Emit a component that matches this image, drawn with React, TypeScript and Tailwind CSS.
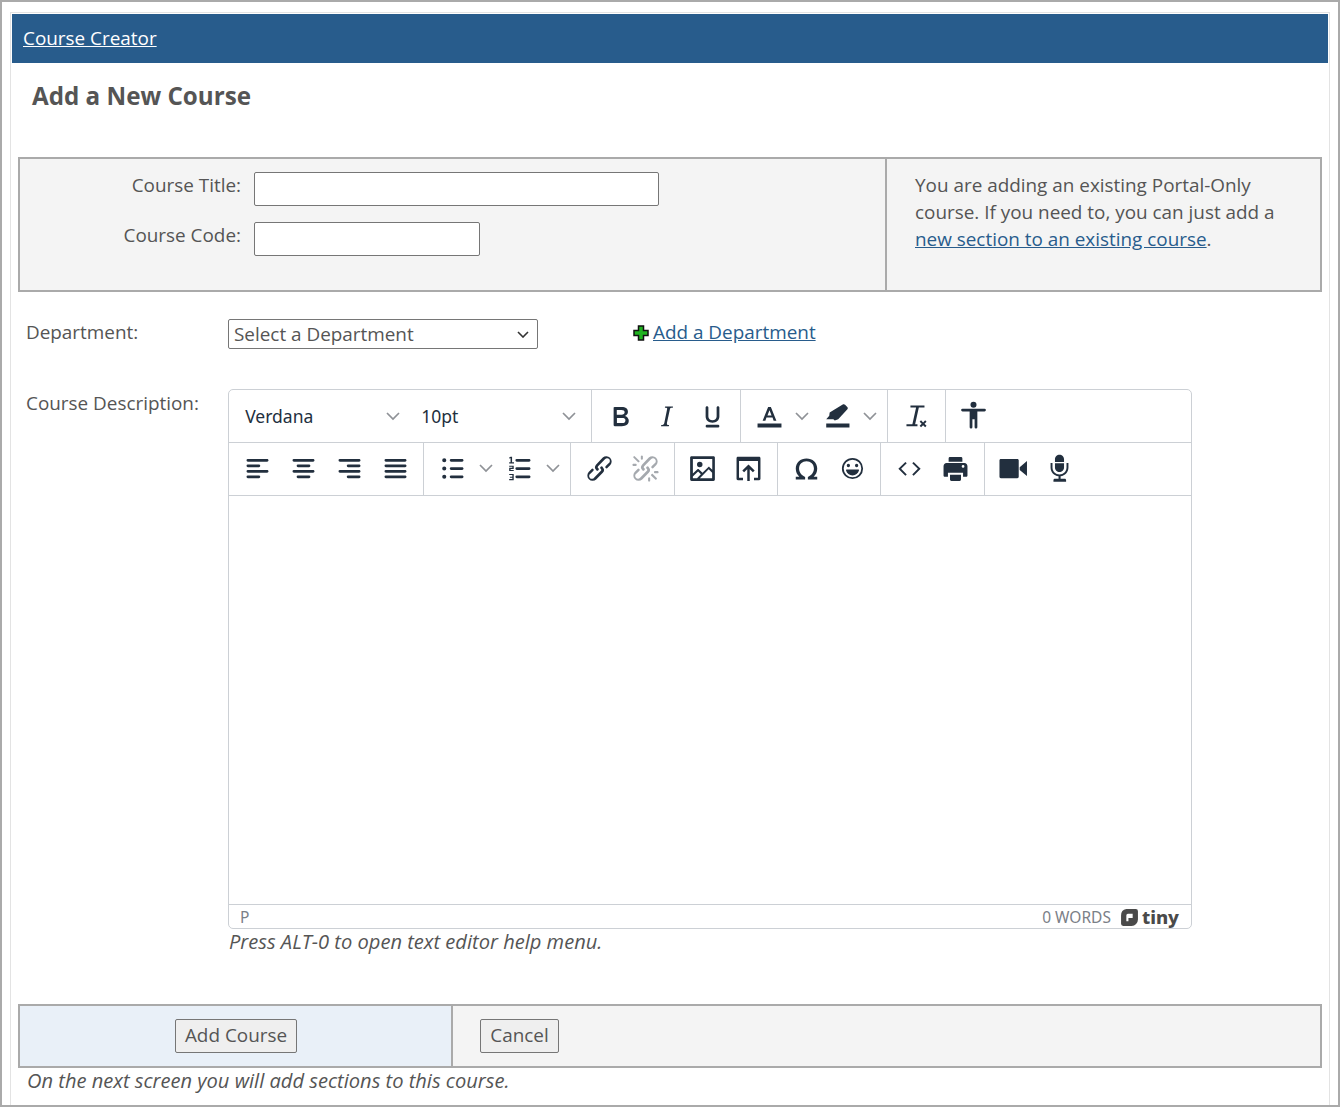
const FONT = "font-['Open_Sans',sans-serif]";
const UI_FONT = "font-['Noto_Sans','Open_Sans',sans-serif]";

function Icon({ d, color = "#222f3e" }: { d: string; color?: string }) {
  return (
    <svg viewBox="0 0 24 24" className="w-[33px] h-[33px]">
      <path d={d} fill={color} />
    </svg>
  );
}

const ICONS = {
  bold: "M7.8 19c-.3 0-.5 0-.6-.2l-.2-.5V5.7c0-.2 0-.4.2-.5l.6-.2h5c1.5 0 2.7.3 3.5 1 .7.6 1.1 1.4 1.1 2.5a3 3 0 0 1-.6 1.9c-.4.6-1 1-1.6 1.2.4.1.9.3 1.3.6s.8.7 1 1.2c.4.4.5 1 .5 1.6 0 1.3-.4 2.3-1.3 3-.8.7-2.1 1-3.8 1H7.8zm5-8.3c.6 0 1.2-.1 1.6-.5.4-.3.6-.7.6-1.3 0-1.1-.8-1.7-2.4-1.7H9.3v3.5h3.4zm.5 6c.7 0 1.3-.1 1.7-.4.4-.4.6-.9.6-1.5s-.2-1-.7-1.4c-.4-.3-1-.4-2-.4H9.4v3.8h4z",
  italic: "M16.7 4.7l-.1.9h-.3c-.6 0-1 0-1.4.3-.3.3-.4.6-.5 1.1l-2.1 9.8v.6c0 .5.4.8 1.4.8h.2l-.2.8H8l.2-.8h.2c1.1 0 1.8-.5 2-1.5l2-9.8.1-.5c0-.6-.4-.8-1.4-.8h-.3l.2-.9h5.8z",
  underline: "M16 4.500c.6 0 1 .4 1 1v6.500c0 2.800-2.200 4.500-5 4.500s-5-1.700-5-4.500V5.500c0-.6.4-1 1-1s1 .4 1 1v6.500c0 1.600 1.300 2.700 3 2.700s3-1.100 3-2.700V5.500c0-.6.4-1 1-1zM8 18h8a1 1 0 0 1 0 2H8a1 1 0 0 1 0-2z",
  forecolor: "M3.300 17h17.400v3H3.300zM11 5h2l4 10h-2l-.8-2.200H9.800L9 15H7l4-10zm1 2.500l-1.500 3.700h3L12 7.500z",
  highlight: "M3.800 17h16.900v3H3.800zM15.800 3.300c.5-.4 1.200-.4 1.700.1l1.600 1.700c.5.5.5 1.200.1 1.700L12.500 14l-2.500.9-1-.9H3.800L6 11.400l.3-2.400z",
  removeformat: "M7.600 4h10.200v1.500h-4.100L11 17.600h1.700V19h-8v-1.400h4.300l2.700-12.100H7.600zM15.300 14.800l1.500 1.500 1.500-1.500 1 1-1.500 1.500 1.500 1.500-1 1-1.500-1.500-1.500 1.500-1-1 1.500-1.500-1.500-1.500z",
  accessibility: "M12 1.200a2.200 2.200 0 1 1 0 4.400 2.200 2.200 0 0 1 0-4.400zM4 6.300h16a1 1 0 0 1 0 2h-5.200v11.500a1 1 0 0 1-2 0V14h-1.600v5.800a1 1 0 0 1-2 0V8.300H4a1 1 0 0 1 0-2z",
  alignLeft: "M5 5h14c.6 0 1 .4 1 1s-.4 1-1 1H5a1 1 0 1 1 0-2zm0 4h8c.6 0 1 .4 1 1s-.4 1-1 1H5a1 1 0 1 1 0-2zm0 8h8c.6 0 1 .4 1 1s-.4 1-1 1H5a1 1 0 0 1 0-2zm0-4h14c.6 0 1 .4 1 1s-.4 1-1 1H5a1 1 0 0 1 0-2z",
  alignCenter: "M5 5h14c.6 0 1 .4 1 1s-.4 1-1 1H5a1 1 0 1 1 0-2zm3 4h8c.6 0 1 .4 1 1s-.4 1-1 1H8a1 1 0 1 1 0-2zm0 8h8c.6 0 1 .4 1 1s-.4 1-1 1H8a1 1 0 0 1 0-2zm-3-4h14c.6 0 1 .4 1 1s-.4 1-1 1H5a1 1 0 0 1 0-2z",
  alignRight: "M5 5h14c.6 0 1 .4 1 1s-.4 1-1 1H5a1 1 0 1 1 0-2zm6 4h8c.6 0 1 .4 1 1s-.4 1-1 1h-8a1 1 0 0 1 0-2zm0 8h8c.6 0 1 .4 1 1s-.4 1-1 1h-8a1 1 0 0 1 0-2zm-6-4h14c.6 0 1 .4 1 1s-.4 1-1 1H5a1 1 0 0 1 0-2z",
  justify: "M5 5h14c.6 0 1 .4 1 1s-.4 1-1 1H5a1 1 0 1 1 0-2zm0 4h14c.6 0 1 .4 1 1s-.4 1-1 1H5a1 1 0 1 1 0-2zm0 4h14c.6 0 1 .4 1 1s-.4 1-1 1H5a1 1 0 0 1 0-2zm0 4h14c.6 0 1 .4 1 1s-.4 1-1 1H5a1 1 0 0 1 0-2z",
  bullets: "M11 5h8c.6 0 1 .4 1 1s-.4 1-1 1h-8a1 1 0 0 1 0-2zm0 6h8c.6 0 1 .4 1 1s-.4 1-1 1h-8a1 1 0 0 1 0-2zm0 6h8c.6 0 1 .4 1 1s-.4 1-1 1h-8a1 1 0 0 1 0-2zM4.500 6a1 1 0 1 1 3 0 1 1 0 0 1-3 0zm0 6a1 1 0 1 1 3 0 1 1 0 0 1-3 0zm0 6a1 1 0 1 1 3 0 1 1 0 0 1-3 0z",
  numbers: "M10 5h9c.6 0 1 .4 1 1s-.4 1-1 1h-9a1 1 0 0 1 0-2zm0 6h9c.6 0 1 .4 1 1s-.4 1-1 1h-9a1 1 0 0 1 0-2zm0 6h9c.6 0 1 .4 1 1s-.4 1-1 1h-9a1 1 0 0 1 0-2zM5.500 3.500h1.100v4H8v.8H4.500v-.8h1v-3l-1 .2v-.7zM4.500 10h3.300v2.300H5.500v.7h2.300v.8H4.500v-2.300h2.300v-.7H4.500zM4.500 16h3.300v4.500H4.500v-.8h2.300v-1H5v-.7h1.800v-1.200H4.500z",
  link: "M6.2 12.3a1 1 0 0 1 1.4 1.4l-2 2a2 2 0 1 0 2.6 2.8l4.8-4.8a1 1 0 0 0 0-1.4 1 1 0 1 1 1.4-1.3 2.9 2.9 0 0 1 0 4L9.6 20a3.9 3.9 0 0 1-5.5-5.5l2-2zm11.6-.6a1 1 0 0 1-1.4-1.4l2-2a2 2 0 1 0-2.6-2.8L11 10.3a1 1 0 0 0 0 1.4A1 1 0 1 1 9.6 13a2.9 2.9 0 0 1 0-4L14.4 4a3.9 3.9 0 0 1 5.5 5.5l-2 2z",
  unlink: "M6.2 12.3a1 1 0 0 1 1.4 1.4l-2.1 2a2 2 0 1 0 2.7 2.8l4.8-4.8a1 1 0 0 0 0-1.4 1 1 0 1 1 1.4-1.3 2.9 2.9 0 0 1 0 4L9.6 20a3.9 3.9 0 0 1-5.5-5.5l2-2zm11.6-.6a1 1 0 0 1-1.4-1.4l2.1-2a2 2 0 1 0-2.7-2.8L11 10.3a1 1 0 0 0 0 1.4A1 1 0 1 1 9.6 13a2.9 2.9 0 0 1 0-4L14.4 4a3.9 3.9 0 0 1 5.5 5.5l-2 2zM7.6 6.3a.8.8 0 0 1-1 1.1L3.3 4.2a.7.7 0 1 1 1-1l3.2 3.1zM5.1 8.6a.8.8 0 0 1 0 1.5H3a.8.8 0 0 1 0-1.5H5zm5-3.5a.8.8 0 0 1-1.5 0V3a.8.8 0 0 1 1.5 0v2zm6 11.8a.8.8 0 0 1 1-1l3.2 3.2a.8.8 0 0 1-1 1L16 17zm-2.2 2a.8.8 0 0 1 1.5 0V21a.8.8 0 0 1-1.5 0V19zm5-3.5a.7.7 0 1 1 0-1.5H21a.8.8 0 0 1 0 1.500H19z",
  image: "M5 15.7l3.3-3.2c.3-.3.7-.3 1 0L12 15l4.1-4c.3-.4.8-.4 1 0l2 1.9V5H5v10.7zM5 18V19h3l2.8-2.9-2-2L5 17.9zm14-3l-2.5-2.4-6.4 6.5H19v-4zM4 3h16c.6 0 1 .4 1 1v16c0 .6-.4 1-1 1H4a1 1 0 0 1-1-1V4c0-.6.4-1 1-1zm6 8a2 2 0 1 0 0-4 2 2 0 0 0 0 4z",
  embed: "M4.300 3.500h15.400c.6 0 1 .4 1 1V19.500c0 .6-.4 1-1 1H16v-1.800h2.900V6.500H5.100v12.200H8v1.800H4.300c-.6 0-1-.4-1-1V4.500c0-.6.4-1 1-1zM12 9l4.500 4.500-1.300 1.300-2.300-2.300V21h-1.800v-8.500l-2.300 2.300-1.300-1.300z",
  omega: "M12 4.700c-4.400 0-7.800 3-7.800 7.300 0 2.500 1 4.500 2.600 6H4.200v2H11v-1.800C8.600 16.900 6.600 15 6.600 12c0-3 2.300-5.200 5.400-5.200s5.400 2.200 5.400 5.200c0 3-2 4.900-4.400 6.200V20h6.800v-2h-2.600c1.600-1.500 2.600-3.500 2.600-6 0-4.300-3.400-7.300-7.800-7.300z",
  emoji: "M9 11a1.200 1.200 0 1 0 0-2.400A1.200 1.200 0 0 0 9 11zm6 0a1.200 1.200 0 1 0 0-2.400 1.200 1.200 0 0 0 0 2.400zm-7.300 1.800h8.600c.3 0 .5.3.4.6-.6 2.100-2.400 3.600-4.700 3.600s-4.100-1.500-4.700-3.600c-.1-.3.1-.6.4-.6zM12 4.300a7.700 7.700 0 1 1 0 15.400 7.700 7.700 0 0 1 0-15.400zm0 1.300a6.400 6.400 0 1 0 0 12.800 6.400 6.400 0 0 0 0-12.800z",
  code: "M9 7.200l1 1-4.100 4 4.100 4.100-1 1-5.100-5.100zM15 7.200l5.100 5-5.100 5.100-1-1 4.100-4.100-4.100-4z",
  print: "M7 4.700c0-.6.4-1 1-1h8c.6 0 1 .4 1 1V7H7zM5.500 8h13c1.300 0 2.200 1 2.200 2.300V17c0 .6-.4 1-1 1h-2.200v-3H6.500v3H4.300c-.6 0-1-.4-1-1v-6.700C3.300 9 4.200 8 5.500 8zm12 1.500a1 1 0 1 0 0 2 1 1 0 0 0 0-2zM8 16.500h8V20c0 .6-.4 1-1 1H9c-.6 0-1-.4-1-1z",
  video: "M2.800 5h12c.6 0 1 .4 1 1v12c0 .6-.4 1-1 1h-12c-.6 0-1-.4-1-1V6c0-.6.4-1 1-1zM21.800 6.500v11L16.500 13v-2z",
  mic: "M8.700 5.300C8.700 3.500 10.200 2 12 2s3.300 1.500 3.300 3.300v1.900H8.700zM8.700 8.100h6.600v3.100c0 1.800-1.500 3.300-3.300 3.300s-3.300-1.500-3.300-3.300zM5.500 8h1.400v3.200c0 2.800 2.300 5.100 5.100 5.100s5.100-2.300 5.100-5.100V8h1.400v3.200c0 3.300-2.500 6-5.700 6.400v1.900h3c.6 0 1 .4 1 1v1.100H7.600v-1.100c0-.6.4-1 1-1h2.700v-1.900c-3.300-.4-5.800-3.100-5.800-6.400z",
};

function Chevron() {
  return (
    <svg viewBox="0 0 14 14" className="w-[14px] h-[14px]">
      <path d="M1 4l6 6 6-6" fill="none" stroke="#8f9297" strokeWidth="1.7" />
    </svg>
  );
}

function Btn({ d, color }: { d: string; color?: string }) {
  return (
    <div className="flex h-[46px] w-[46px] items-center justify-center">
      <Icon d={d} color={color} />
    </div>
  );
}

function Caret() {
  return (
    <div className="flex h-[46px] w-[20px] items-center justify-center">
      <Chevron />
    </div>
  );
}

function Group({ children, last, lift }: { children: React.ReactNode; last?: boolean; lift?: boolean }) {
  return (
    <div className={`flex items-center px-[5.2px] ${lift ? "pb-[2px]" : ""} ${last ? "" : "border-r border-[#ccd0d5]"}`}>
      {children}
    </div>
  );
}

function FontPicker({ label, width }: { label: string; width: string }) {
  return (
    <div className={`flex items-center justify-between pl-[11px] pr-[10px] ${width}`}>
      <span className={`${UI_FONT} text-[17.5px] text-[#222f3e]`}>{label}</span>
      <Chevron />
    </div>
  );
}

function Editor() {
  return (
    <div className="flex h-[540px] w-[964px] flex-col rounded-[5px] border border-[#ccd0d5]">
      <div className="flex h-[53px] border-b border-[#ccd0d5]">
        <Group>
          <FontPicker label="Verdana" width="w-[176px]" />
          <FontPicker label="10pt" width="w-[175.5px]" />
        </Group>
        <Group>
          <Btn d={ICONS.bold} />
          <Btn d={ICONS.italic} />
          <Btn d={ICONS.underline} />
        </Group>
        <Group>
          <Btn d={ICONS.forecolor} />
          <Caret />
          <div className="w-[2px]" />
          <Btn d={ICONS.highlight} />
          <Caret />
          <div className="w-[1.600px]" />
        </Group>
        <Group>
          <Btn d={ICONS.removeformat} />
        </Group>
        <Group last>
          <Btn d={ICONS.accessibility} />
        </Group>
      </div>
      <div className="flex h-[53px] border-b border-[#ccd0d5]">
        <Group lift>
          <Btn d={ICONS.alignLeft} />
          <Btn d={ICONS.alignCenter} />
          <Btn d={ICONS.alignRight} />
          <Btn d={ICONS.justify} />
        </Group>
        <Group lift>
          <Btn d={ICONS.bullets} />
          <Caret />
          <div className="w-px" />
          <Btn d={ICONS.numbers} />
          <Caret />
          <div className="w-[2.600px]" />
        </Group>
        <Group lift>
          <Btn d={ICONS.link} />
          <Btn d={ICONS.unlink} color="#a5a9ae" />
        </Group>
        <Group lift>
          <Btn d={ICONS.image} />
          <Btn d={ICONS.embed} />
        </Group>
        <Group lift>
          <Btn d={ICONS.omega} />
          <Btn d={ICONS.emoji} />
        </Group>
        <Group lift>
          <Btn d={ICONS.code} />
          <Btn d={ICONS.print} />
        </Group>
        <Group last lift>
          <Btn d={ICONS.video} />
          <Btn d={ICONS.mic} />
        </Group>
      </div>
      <div className="flex-1" />
      <div className={`${UI_FONT} flex h-[24px] items-center justify-between border-t border-[#ccd0d5] pl-[11px] pr-[12px] pt-[2px] text-[15.5px] text-[#7b8087]`}>
        <span>P</span>
        <div className="flex items-center gap-[9px]">
          <span>0 WORDS</span>
          <div className="flex items-center gap-[3px]">
            <svg viewBox="0 0 18 18" className="h-[19px] w-[19px]">
              <path
                fillRule="evenodd"
                fill="#4a4a4a"
                d="M6 1h9a2 2 0 0 1 2 2v8a6 6 0 0 1-6 6H3a2 2 0 0 1-2-2V7a6 6 0 0 1 5-6zm1.500 4.500A1.500 1.500 0 0 0 6 7v5.500h2V9.500h4V5.500z"
              />
            </svg>
            <span className="text-[18.5px] font-extrabold leading-none text-[#4a4a4a]">tiny</span>
          </div>
        </div>
      </div>
    </div>
  );
}

export default function App() {
  return (
    <div className={`${FONT} h-[1107px] overflow-hidden border-2 border-[#aaa] bg-white text-[18.9px] text-[#555]`}>
      <div className="mx-[8px] mt-[10px] h-[1100px] border-x border-t border-[#e3e3e3] px-px pt-px">
        <div className="flex h-[49px] items-center bg-[#285c8c] pl-[11px]">
          <a href="#" className="text-white underline">Course Creator</a>
        </div>
        <h1 className="pl-[20px] pt-[15px] text-[24.2px] font-bold leading-[36px] text-[#555]">Add a New Course</h1>

        <div className="mx-[6px] mt-[43px] flex h-[135px] border-2 border-[#aaa] bg-[#f4f4f4]">
          <div className="w-[867px] border-r-2 border-[#aaa] pt-[13px]">
            <div className="flex items-start">
              <label className="w-[221px] text-right leading-[26px]">Course Title:</label>
              <input className="ml-[13px] h-[34px] w-[405px] rounded-[2px] border border-[#767676] bg-white" />
            </div>
            <div className="mt-[16px] flex items-start">
              <label className="w-[221px] text-right leading-[26px]">Course Code:</label>
              <input className="ml-[13px] h-[34px] w-[226px] rounded-[2px] border border-[#767676] bg-white" />
            </div>
          </div>
          <p className="w-[400px] pl-[28px] pt-[13px] leading-[27px]">
            You are adding an existing Portal-Only course. If you need to, you can just add a{" "}
            <a href="#" className="text-[#285c8c] underline">new section to an existing course</a>.
          </p>
        </div>

        <div className="mt-[27px] flex items-start pl-[14px]">
          <label className="w-[202px] leading-[26px]">Department:</label>
          <div className="relative">
            <select className="h-[30px] w-[310px] appearance-none rounded-[2px] border border-[#767676] bg-white pl-[5px] text-[18.9px]">
              <option>Select a Department</option>
            </select>
            <svg viewBox="0 0 12 7" className="absolute right-[9px] top-[12px] h-[7px] w-[12px]">
              <path d="M1 1l5 5 5-5" fill="none" stroke="#333" strokeWidth="1.6" />
            </svg>
          </div>
          <div className="ml-[95px] flex items-center gap-[4px] leading-[26px]">
            <svg viewBox="0 0 16 16" className="mt-[2px] h-[16px] w-[16px]">
              <path d="M5.500 1h5v4.500H15v5h-4.500V15h-5v-4.500H1v-5h4.500z" fill="#1fb31f" stroke="#111" strokeWidth="1.5" />
            </svg>
            <a href="#" className="text-[#285c8c] underline">Add a Department</a>
          </div>
        </div>

        <div className="mt-[40px] flex pl-[14px]">
          <label className="w-[202px]">Course Description:</label>
          <div>
            <Editor />
            <p className="pl-px text-[20.100px] italic leading-[26px]">Press ALT-0 to open text editor help menu.</p>
          </div>
        </div>

        <div className="mx-[6px] mt-[49px] flex h-[64px] border-2 border-[#aaa] bg-[#f4f4f4]">
          <div className="flex w-[433px] items-center justify-center border-r-2 border-[#aaa] bg-[#e9f0f8] pl-[1px]">
            <button className="h-[34px] w-[122px] rounded-[2px] border border-[#767676] bg-[#efefef] pb-[2px] text-[#555]">Add Course</button>
          </div>
          <div className="flex items-center pl-[27px]">
            <button className="h-[34px] w-[79px] rounded-[2px] border border-[#767676] bg-[#efefef] pb-[2px] text-[#555]">Cancel</button>
          </div>
        </div>
        <p className="pl-[15px] text-[20.100px] italic leading-[26px]">On the next screen you will add sections to this course.</p>
      </div>
    </div>
  );
}
